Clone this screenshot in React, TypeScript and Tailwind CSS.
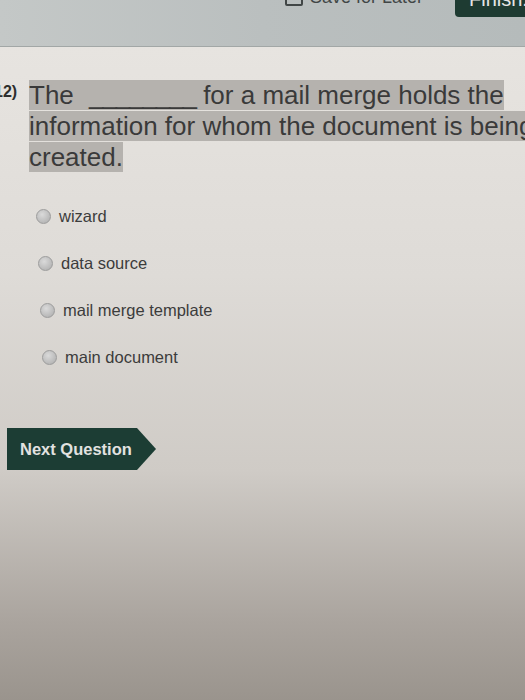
import React from "react";

const options = [
  { label: "wizard", pl: "pl-[36px]" },
  { label: "data source", pl: "pl-[38px]" },
  { label: "mail merge template", pl: "pl-[40px]" },
  { label: "main document", pl: "pl-[42px]" },
];

export default function App() {
  return (
    <div
      className="w-full h-[700px] overflow-hidden flex flex-col"
      style={{ fontFamily: '"Liberation Sans", Arial, sans-serif' }}
    >
      {/* header */}
      <div className="h-[47px] shrink-0 bg-[linear-gradient(to_right,#c4c8c7,#babfbf_50%,#b5bbbb)] border-b border-[#a2a7a6] flex items-start">
        <div className="flex items-start mt-[-12px] ml-[285px] gap-[7px]">
          <div className="w-[18px] h-[18px] border-2 border-[#414646] rounded-[2px]" />
          <span className="text-[18px] leading-[18px] text-[#414646]">Save for Later</span>
        </div>
        <div className="ml-auto mt-[-13px] mr-[-10px] h-[30px] w-[80px] bg-[#1e3b32] rounded-[4px] flex items-start pl-[14px]">
          <span className="text-[20px] leading-[24px] text-[#e6e6e6]">Finish.</span>
        </div>
      </div>

      {/* body */}
      <div className="flex-1 bg-[linear-gradient(to_bottom,#e7e4e0_0%,#dedbd7_35%,#cfcbc6_65%,#aaa49e_88%,#9a948d_100%)] pt-[33px]">
        <div className="flex items-start">
          <div className="w-[35px] ml-[-6px] shrink-0 pt-[4px] text-[16px] font-bold text-[#2e2e2e] leading-[16px]">
            12)
          </div>
          <div className="w-[560px] shrink-0 text-[26px] leading-[31px] text-[#3a3a3a]">
            <span className="bg-[#b5b2ae]">
              The <span className="ml-[8px] tracking-[-1.1px]">________</span> for a mail merge holds the information for whom the document is being created.
            </span>
          </div>
        </div>

        <div className="mt-[20px] flex flex-col">
          {options.map((o) => (
            <div key={o.label} className={`h-[47px] flex items-center ${o.pl}`}>
              <div className="w-[15px] h-[15px] rounded-full border border-[#9c9c9c] bg-[radial-gradient(circle_at_40%_35%,#dadada,#b9b9b9_70%,#a6a6a6)] shrink-0" />
              <span className="ml-[8px] text-[16.5px] text-[#3c3c3c]">{o.label}</span>
            </div>
          ))}
        </div>

        <div className="mt-[47px] ml-[7px] w-[149px] h-[42px] bg-[#1c3d34] [clip-path:polygon(0_0,calc(100%-19px)_0,100%_50%,calc(100%-19px)_100%,0_100%)] flex items-center pl-[13px]">
          <span className="text-[16.5px] font-bold text-[#e2e2e0]">Next Question</span>
        </div>
      </div>
    </div>
  );
}
